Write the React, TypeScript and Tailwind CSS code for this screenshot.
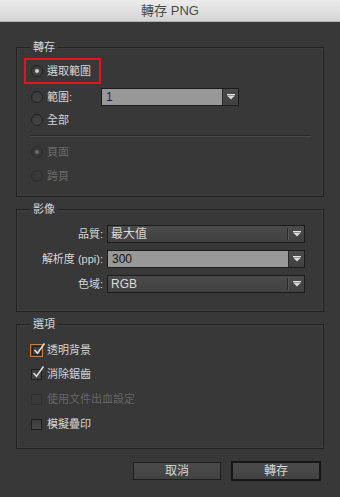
import React from "react";

const font = { fontFamily: '"Liberation Sans", "Noto Sans CJK TC", sans-serif' };

function Arrow({ dim }: { dim?: boolean }) {
  return (
    <svg width="8" height="6" viewBox="0 0 8 6" className="block">
      <rect x="0" y="0" width="8" height="1" fill={dim ? "#9a9a9a" : "#e6e6e6"} />
      <path d="M0 1.5 H8 L4 5.5 Z" fill={dim ? "#9a9a9a" : "#d8d8d8"} />
    </svg>
  );
}

function Radio({ checked, disabled }: { checked?: boolean; disabled?: boolean }) {
  return (
    <span
      className={`flex h-[12px] w-[12px] shrink-0 items-center justify-center rounded-full border ${
        disabled ? "border-[#2c2c2c] bg-[#383838]" : "border-[#202020] bg-gradient-to-b from-[#3c3c3c] to-[#444444]"
      }`}
    >
      {checked && (
        <span className={`h-[4px] w-[4px] rounded-full ${disabled ? "bg-[#6c6c6c]" : "bg-[#d2d2d2]"}`} />
      )}
    </span>
  );
}

function Check({ checked, disabled, focus }: { checked?: boolean; disabled?: boolean; focus?: boolean }) {
  return (
    <span
      className={`relative block h-[13px] w-[13px] shrink-0 ${
        focus ? "border border-[#e0731c] p-px" : "p-px"
      }`}
    >
      <span
        className={`block h-full w-full border ${
          disabled ? "border-[#2f2f2f] bg-[#3a3a3a]" : "border-[#1e1e1e] bg-gradient-to-b from-[#3d3d3d] to-[#474747]"
        }`}
      />
      {checked && (
        <svg width="14" height="14" viewBox="0 0 14 14" className="absolute left-[1px] top-[-3px]">
          <path d="M2.5 8 L5.5 11.2 L12.5 1.5" fill="none" stroke="#dcdcdc" strokeWidth="1.6" />
        </svg>
      )}
    </span>
  );
}

function Select({ value, className }: { value: string; className: string }) {
  return (
    <div
      className={`flex h-[18px] items-stretch border border-[#1c1c1c] bg-gradient-to-b from-[#4b4b4b] to-[#414141] ${className}`}
    >
      <span className="flex flex-1 items-center pl-[3px] text-[12px] text-[#dadada]">{value}</span>
      <span className="my-[2px] w-px bg-[#2a2a2a]" />
      <span className="my-[2px] w-px bg-[#555555]" />
      <span className="flex w-[15px] items-center justify-center">
        <Arrow />
      </span>
    </div>
  );
}

function Combo({ value, className, dark }: { value: string; className: string; dark?: boolean }) {
  return (
    <div className={`flex h-[18px] items-stretch border border-[#1c1c1c] ${className}`}>
      <span
        className={`flex flex-1 items-center bg-[#989898] pl-[4px] text-[12px] ${
          dark ? "text-[#1b2640]" : "text-[#151515]"
        }`}
      >
        {value}
      </span>
      <span className="w-px bg-[#2a2a2a]" />
      <span className="flex w-[15px] items-center justify-center bg-gradient-to-b from-[#4b4b4b] to-[#414141]">
        <Arrow />
      </span>
    </div>
  );
}

function Group({ label, className, children }: { label: string; className: string; children: React.ReactNode }) {
  return (
    <div className={`relative border border-[#222222] shadow-[inset_0_0_0_1px_#3e3e3e] ${className}`}>
      <span className="absolute left-[13px] top-[-8px] bg-[#383838] px-[3px] text-[11px] leading-[14px] text-[#d6d6d6]">
        {label}
      </span>
      {children}
    </div>
  );
}

export default function App() {
  return (
    <div className="flex h-[497px] w-[340px] flex-col bg-[#383838] text-[11px] text-[#d6d6d6]" style={font}>
      <div className="flex h-[22px] shrink-0 items-center justify-center border-b border-[#b0b0b0] bg-gradient-to-b from-[#ececec] to-[#d4d4d4] text-[13px] text-[#4a4a4a]">
        轉存 PNG
      </div>

      <div className="flex flex-col pl-[16px] pr-[16px]">
        <Group label="轉存" className="mt-[25px] h-[150px] pt-[10px]">
          <div className="ml-[7px] flex h-[26px] w-[77px] items-center gap-[4px] border-2 border-[#e3141c] pl-[5px]">
            <Radio checked />
            <span>選取範圍</span>
          </div>
          <div className="mt-[4px] flex h-[18px] items-center pl-[14px]">
            <Radio />
            <span className="ml-[4px] w-[54px]">範圍:</span>
            <Combo value="1" dark className="w-[138px]" />
          </div>
          <div className="mt-[5px] flex h-[18px] items-center gap-[4px] pl-[14px]">
            <Radio />
            <span>全部</span>
          </div>
          <div className="ml-[13px] mr-[12px] mt-[6px] h-[2px] border-t border-[#2a2a2a] border-b-[#484848] border-b" />
          <div className="mt-[6px] flex h-[18px] items-center gap-[4px] pl-[14px] text-[#6a6a6a]">
            <Radio checked disabled />
            <span>頁面</span>
          </div>
          <div className="mt-[6px] flex h-[18px] items-center gap-[4px] pl-[14px] text-[#6a6a6a]">
            <Radio disabled />
            <span>跨頁</span>
          </div>
        </Group>

        <Group label="影像" className="mt-[12px] h-[103px] pt-[15px]">
          {[
            ["品質:", "最大值", "select"],
            ["解析度 (ppi):", "300", "combo"],
            ["色域:", "RGB", "select"],
          ].map(([l, v, t], i) => (
            <div key={l} className={`flex h-[18px] items-center ${i > 0 ? "mt-[7px]" : ""}`}>
              <span className="w-[86px] text-right">{l}</span>
              {t === "select" ? (
                <Select value={v} className="ml-[4px] w-[198px]" />
              ) : (
                <Combo value={v} className="ml-[4px] w-[198px]" />
              )}
            </div>
          ))}
        </Group>

        <Group label="選項" className="mt-[12px] h-[125px] pt-[16px]">
          <div className="flex h-[18px] items-center gap-[4px] pl-[13px]">
            <Check checked focus />
            <span>透明背景</span>
          </div>
          <div className="mt-[6px] flex h-[18px] items-center gap-[4px] pl-[13px]">
            <Check checked />
            <span>消除鋸齒</span>
          </div>
          <div className="mt-[7px] flex h-[18px] items-center gap-[4px] pl-[13px] text-[#666666]">
            <Check disabled />
            <span>使用文件出血設定</span>
          </div>
          <div className="mt-[7px] flex h-[18px] items-center gap-[4px] pl-[13px]">
            <Check />
            <span>模擬疊印</span>
          </div>
        </Group>

        <div className="mt-[12px] flex items-center justify-end gap-[10px] pr-[3px]">
          <div className="flex h-[18px] w-[88px] items-center justify-center border border-[#1e1e1e] bg-gradient-to-b from-[#4a4a4a] to-[#424242] text-[12px]">
            取消
          </div>
          <div className="flex h-[20px] w-[90px] items-center justify-center border-2 border-[#161616] bg-gradient-to-b from-[#4a4a4a] to-[#424242] text-[12px]">
            轉存
          </div>
        </div>
      </div>
    </div>
  );
}
